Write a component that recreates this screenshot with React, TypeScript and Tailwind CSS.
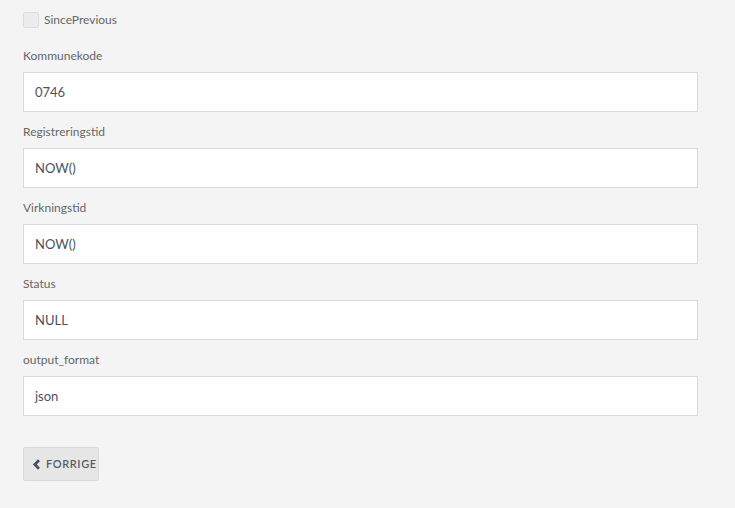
import React from 'react';

const fields: { label: string; value: string }[] = [
  { label: 'Kommunekode', value: '0746' },
  { label: 'Registreringstid', value: 'NOW()' },
  { label: 'Virkningstid', value: 'NOW()' },
  { label: 'Status', value: 'NULL' },
  { label: 'output_format', value: 'json' },
];

const App: React.FC = () => {
  return (
    <div className="min-h-[508px] w-full bg-[#f4f4f4] font-['Lato','Open_Sans',sans-serif] text-[12px]">
      <div className="w-[698px] pl-[23px] pt-[12px]">
        {/* Checkbox */}
        <label className="flex h-[16px] items-center gap-[5px]">
          <span className="block h-[16px] w-[16px] rounded-[2px] border border-[#dcdcdc] bg-[#ececec]"></span>
          <span className="text-[#666]">SincePrevious</span>
        </label>

        {/* Fields */}
        <div className="mt-[19px] flex flex-col gap-[11px]">
          {fields.map((f) => (
            <div key={f.label}>
              <div className="mb-[8px] leading-[17px] text-[#666]">{f.label}</div>
              <div className="flex h-[40px] w-full items-center border border-[#dadada] bg-white px-[11px] pt-[1px] text-[13px] text-[#4a5260]">
                {f.value}
              </div>
            </div>
          ))}
        </div>

        {/* Button */}
        <button className="mt-[31px] flex h-[34px] w-[76px] items-center gap-[5px] rounded-[2px] border border-[#d9d9d9] bg-[#e6e6e6] pl-[8px] text-[11px] font-semibold tracking-[0.6px] text-[#555b66]">
          <svg width="9" height="11" viewBox="0 0 9 11">
            <path d="M7 1.2 L2.8 5.5 L7 9.8" fill="none" stroke="#4a5260" strokeWidth="2.8" />
          </svg>
          FORRIGE
        </button>
      </div>
    </div>
  );
};

export default App;
